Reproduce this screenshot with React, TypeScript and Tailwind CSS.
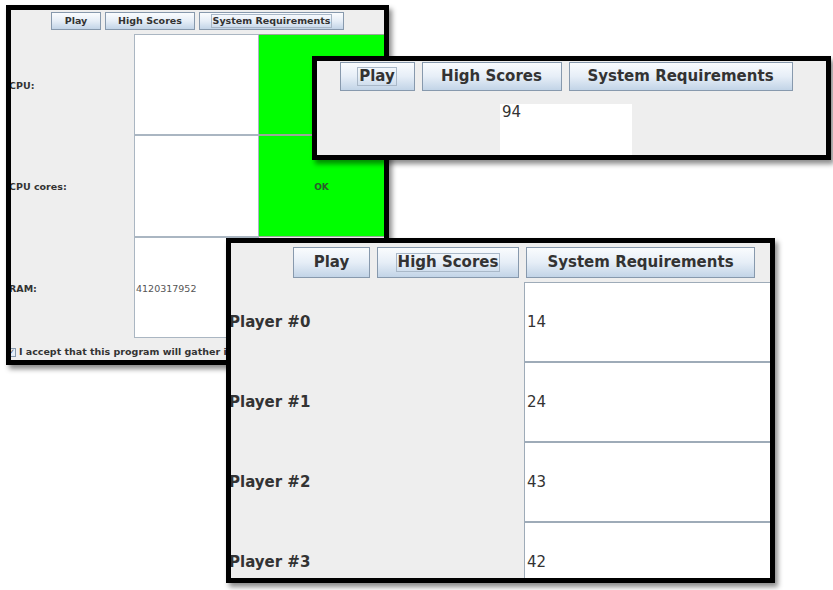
import React from 'react'

const FONT = { fontFamily: '"DejaVu Sans", Verdana, sans-serif' }

function JButton({ label, focused, className }: { label: string; focused?: boolean; className: string }) {
  return (
    <div
      className={`flex items-center justify-center border border-[#8799ad] bg-gradient-to-b from-[#fafcfe] via-[#e6eef7] to-[#c2d4e7] font-bold text-[#333333] ${className}`}
    >
      <span className={focused ? 'border border-[#a9b8c8] px-[1px] leading-none py-[1px]' : 'leading-none'}>{label}</span>
    </div>
  )
}

function Window({ className, children }: { className: string; children: React.ReactNode }) {
  return (
    <div className={`absolute overflow-hidden border-[5px] border-black bg-[#eeeeee] shadow-[3px_4px_5px_rgba(0,0,0,0.45)] ${className}`}>
      {children}
    </div>
  )
}

// back window: system requirements check
function RequirementsWindow() {
  const rows = [
    { label: 'CPU:', value: '', status: '' },
    { label: 'CPU cores:', value: '', status: 'OK' },
    { label: 'RAM:', value: '4120317952', status: null },
  ]
  return (
    <Window className="left-[6px] top-[5px] w-[383px] h-[360px]">
      <div className="flex h-[22px] items-start justify-center gap-[4px] pt-[2px] text-[9.5px]">
        <JButton label="Play" className="w-[50px] h-[18px]" />
        <JButton label="High Scores" className="w-[90px] h-[18px]" />
        <JButton label="System Requirements" focused className="w-[145px] h-[18px]" />
      </div>
      <div className="grid grid-cols-[123px_125px_125px] grid-rows-[101px_102px_101px] pt-[2px]">
        {rows.map((r, i) => (
          <React.Fragment key={i}>
            <div className="-ml-[2px] flex items-center pt-[3px] text-[9.5px] font-bold text-[#333333]">{r.label}</div>
            <div className="flex items-center border border-[#aab6c2] bg-white pl-[1px] pt-[3px] text-[9.5px] text-[#555555]">{r.value}</div>
            {r.status === null ? (
              <div />
            ) : (
              <div className="flex items-center justify-center border-y border-[#9aa79a] bg-[#00ff00] pt-[3px] text-[9px] font-bold text-[#2c5a2c]">
                {r.status}
              </div>
            )}
          </React.Fragment>
        ))}
      </div>
      <div className="-ml-[3px] mt-[7px] flex items-center gap-[3px] whitespace-nowrap text-[9.5px] font-bold text-[#333333]">
        <span className="flex h-[9px] w-[9px] items-center justify-center border border-[#8799ad] bg-[#e6eef7] text-[7px] leading-none text-[#555]">✓</span>
        I accept that this program will gather information about your system
      </div>
    </Window>
  )
}

// middle window: play tab
function PlayWindow() {
  return (
    <Window className="left-[312px] top-[56px] w-[519px] h-[104px]">
      <div className="flex w-[498px] flex-col items-center">
        <div className="mt-[1px] flex gap-[7px] text-[15px]">
          <JButton label="Play" focused className="w-[75px] h-[29px]" />
          <JButton label="High Scores" className="w-[140px] h-[29px]" />
          <JButton label="System Requirements" className="w-[224px] h-[29px]" />
        </div>
        <div className="mt-[13px] h-[60px] w-[132px] bg-white pl-[2px] text-[15px] leading-[16px] text-[#333333]">94</div>
      </div>
    </Window>
  )
}

// front window: high scores
function ScoresWindow() {
  const scores = [14, 24, 43, 42]
  return (
    <Window className="left-[226px] top-[238px] w-[549px] h-[345px]">
      <div className="-ml-[2px] w-[590px]">
        <div className="flex justify-center gap-[7px] pt-[4px] text-[15px]">
          <JButton label="Play" className="w-[77px] h-[31px]" />
          <JButton label="High Scores" focused className="w-[142px] h-[31px]" />
          <JButton label="System Requirements" className="w-[229px] h-[31px]" />
        </div>
        <div className="mt-[4px] grid grid-cols-2 auto-rows-[80px]">
          {scores.map((s, i) => (
            <React.Fragment key={i}>
              <div className="flex items-center text-[15px] font-bold text-[#333333]">Player #{i}</div>
              <div className="flex items-center border border-[#9eabb8] bg-white pl-[2px] text-[15px] text-[#333333]">{s}</div>
            </React.Fragment>
          ))}
        </div>
      </div>
    </Window>
  )
}

export default function App() {
  return (
    <div className="relative h-[590px] w-[833px] overflow-hidden bg-white" style={FONT}>
      <RequirementsWindow />
      <PlayWindow />
      <ScoresWindow />
    </div>
  )
}
